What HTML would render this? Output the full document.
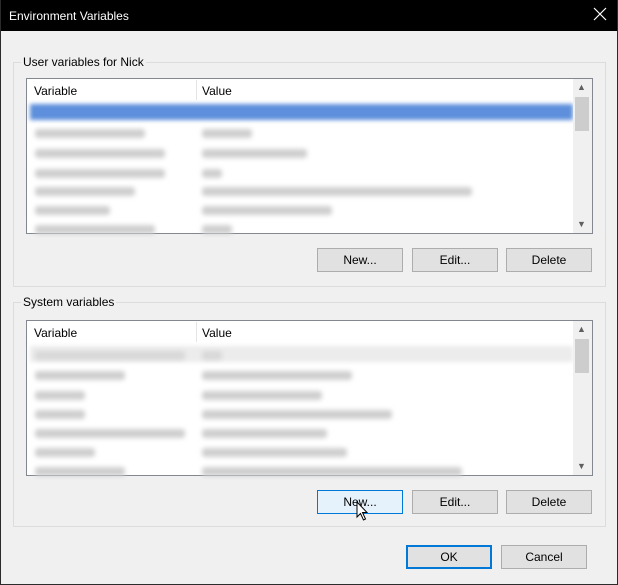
<!DOCTYPE html><html><head><style>
*{margin:0;padding:0;box-sizing:border-box}
body{width:618px;height:585px;background:#2b2b2b;font-family:"Liberation Sans",sans-serif;font-size:12px;color:#000;position:relative;overflow:hidden}
.win{position:absolute;left:1px;top:0;width:616px;height:584px;background:#f0f0f0}
.title{position:absolute;left:0;top:0;width:616px;height:31px;background:#000;color:#fff;font-size:12px}
.title span{position:absolute;left:8px;top:9px}
.x{position:absolute;right:10px;top:7px}
.grp{position:absolute;left:12px;width:593px;border:1px solid #dcdcdc}
.lbl{position:absolute;left:7px;top:-8px;background:#f0f0f0;padding:0 2px;}
.list{position:absolute;left:25px;width:567px;height:156px;background:#fff;border:1px solid #828790}
.hdr{position:absolute;left:0;top:0;width:545px;height:22px;}
.hdr span{position:absolute;top:5px}
.sep{position:absolute;left:169px;top:1px;width:1px;height:20px;background:#e5e5e5}
.sb{position:absolute;right:0;top:0;width:19px;height:154px;background:#f0f0f0}
.thumb{position:absolute;left:2px;top:18px;width:14px;height:34px;background:#cdcdcd}
.ar{position:absolute;left:4px;font-size:9px;color:#606060}
.r{position:absolute;height:9px;background:#cfcfcf;filter:blur(2.5px);border-radius:3px}
.btn{position:absolute;width:86px;height:24px;background:#e1e1e1;border:1px solid #adadad;text-align:center;line-height:22px}
</style></head><body><div class="win">
<div class="title"><span>Environment Variables</span><svg class="x" width="14" height="14"><path d="M1 1L13 13M13 1L1 13" stroke="#fff" stroke-width="1.2"/></svg></div>

<div class="grp" style="top:62px;height:225px"><div class="lbl">User variables for Nick</div></div>
<div class="list" style="top:78px">
<div class="hdr"><span style="left:7px">Variable</span><div class="sep"></div><span style="left:175px">Value</span></div>
<div style="position:absolute;left:3px;top:25px;width:543px;height:16px;background:#5d8fdc;filter:blur(2px)"></div>
<div class="r" style="left:8px;top:50px;width:110px"></div><div class="r" style="left:175px;top:50px;width:50px"></div>
<div class="r" style="left:8px;top:70px;width:130px"></div><div class="r" style="left:175px;top:70px;width:105px"></div>
<div class="r" style="left:8px;top:90px;width:130px"></div><div class="r" style="left:175px;top:90px;width:20px"></div>
<div class="r" style="left:8px;top:108px;width:100px"></div><div class="r" style="left:175px;top:108px;width:270px"></div>
<div class="r" style="left:8px;top:127px;width:75px"></div><div class="r" style="left:175px;top:127px;width:130px"></div>
<div class="r" style="left:8px;top:146px;width:120px"></div><div class="r" style="left:175px;top:146px;width:30px"></div>
<div class="sb"><span class="ar" style="top:3px">&#9650;</span><div class="thumb"></div><span class="ar" style="top:140px">&#9660;</span></div>
</div>
<div class="btn" style="left:316px;top:248px">New...</div>
<div class="btn" style="left:411px;top:248px">Edit...</div>
<div class="btn" style="left:505px;top:248px">Delete</div>

<div class="grp" style="top:302px;height:225px"><div class="lbl">System variables</div></div>
<div class="list" style="top:320px">
<div class="hdr"><span style="left:7px">Variable</span><div class="sep"></div><span style="left:175px">Value</span></div>
<div style="position:absolute;left:3px;top:25px;width:543px;height:16px;background:#ececec;filter:blur(2px)"></div>
<div class="r" style="left:8px;top:30px;width:150px;background:#d8d8d8"></div><div class="r" style="left:175px;top:30px;width:20px;background:#d8d8d8"></div>
<div class="r" style="left:8px;top:50px;width:90px"></div><div class="r" style="left:175px;top:50px;width:150px"></div>
<div class="r" style="left:8px;top:70px;width:50px"></div><div class="r" style="left:175px;top:70px;width:120px"></div>
<div class="r" style="left:8px;top:89px;width:50px"></div><div class="r" style="left:175px;top:89px;width:190px"></div>
<div class="r" style="left:8px;top:108px;width:150px"></div><div class="r" style="left:175px;top:108px;width:125px"></div>
<div class="r" style="left:8px;top:127px;width:60px"></div><div class="r" style="left:175px;top:127px;width:145px"></div>
<div class="r" style="left:8px;top:146px;width:90px"></div><div class="r" style="left:175px;top:146px;width:260px"></div>
<div class="sb"><span class="ar" style="top:3px">&#9650;</span><div class="thumb"></div><span class="ar" style="top:140px">&#9660;</span></div>
</div>
<div class="btn" style="left:316px;top:490px;background:#e5f1fb;border-color:#0078d7">New...</div>
<div class="btn" style="left:411px;top:490px">Edit...</div>
<div class="btn" style="left:505px;top:490px">Delete</div>
<svg style="position:absolute;left:355px;top:501px" width="14" height="22"><path d="M1 1L1 16L4.5 12.5L7.5 19L9.5 18L6.5 11.5L11 11.5Z" fill="#fff" stroke="#000"/></svg>

<div class="btn" style="left:405px;top:545px;border:2px solid #0078d7;line-height:20px">OK</div>
<div class="btn" style="left:500px;top:545px">Cancel</div>
</div></body></html>
